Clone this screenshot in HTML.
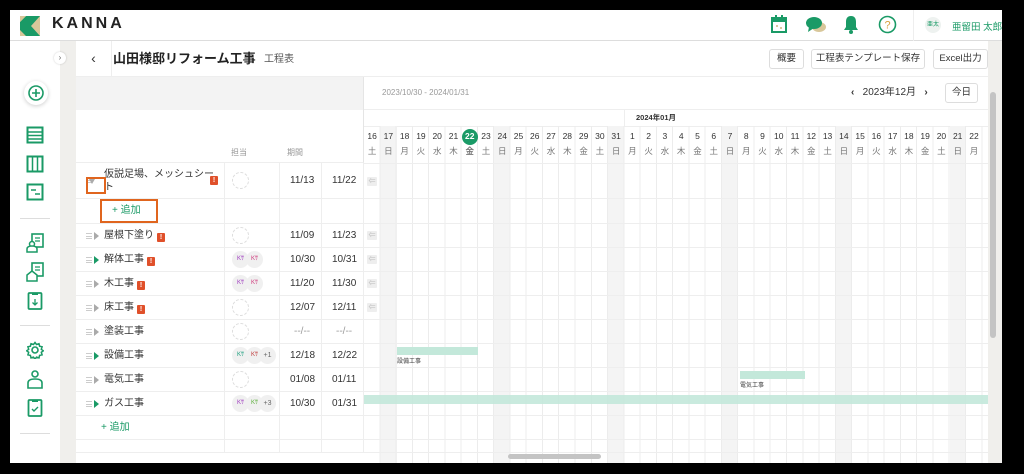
<!DOCTYPE html>
<html><head><meta charset="utf-8">
<style>
*{box-sizing:border-box;margin:0;padding:0}
body{width:1024px;height:474px;background:#000;position:relative;overflow:hidden;font-family:"Liberation Sans","Noto Sans CJK JP",sans-serif;color:#333}
.a{position:absolute}
.win{left:10px;top:10px;width:992px;height:453px;background:#fff;overflow:hidden}
.hdr{left:0;top:0;width:992px;height:31px;background:#fff;border-bottom:1px solid #ddd;box-shadow:0 1px 3px rgba(0,0,0,.15)}
.side{left:0;top:31px;width:50px;height:422px;background:#fff}
.strip{left:50px;top:31px;width:16px;height:422px;background:#f0efec}
.rstrip{left:978px;top:31px;width:14px;height:422px;background:#f0efec}
.g{color:#1a9a66}
.btn{border:1px solid #ddd;border-radius:3px;background:#fff;font-size:9.5px;height:20px;line-height:18px;text-align:center;color:#333;white-space:nowrap;overflow:hidden}
.row{left:66px;width:912px;height:24px;border-bottom:1px solid #eee}
.cell{position:absolute;top:0;height:100%;border-right:1px solid #eee}
.dt{position:absolute;font-size:10px;line-height:12px;color:#333;top:6px}
.nm{position:absolute;left:28px;top:5px;font-size:10px;line-height:13px;color:#333;white-space:nowrap}
.hb{position:absolute;left:10px;top:9px;width:6px;height:6px;border-top:1px solid #ccc;border-bottom:1px solid #ccc}
.hb:after{content:"";position:absolute;left:0;top:2px;width:6px;border-top:1px solid #ccc}
.tri{position:absolute;left:18px;top:8px;width:0;height:0;border-left:5px solid #aaa;border-top:4px solid transparent;border-bottom:4px solid transparent}
.tri.gr{border-left-color:#1a9a66}
.ex{display:inline-block;width:8px;height:9px;background:#e0502a;color:#fff;font-size:7px;line-height:9px;text-align:center;border-radius:1px;margin-left:3px;vertical-align:-1px;font-weight:bold}
.cir{position:absolute;left:7px;top:3px;width:17px;height:17px;border:1px dashed #ddd;border-radius:50%}
.av{position:absolute;top:3px;width:17px;height:17px;border-radius:50%;background:#f0f0f0;font-size:6px;line-height:17px;text-align:center}
.arr{position:absolute;left:3px;top:7px;width:10px;height:9px;background:#eee;border-radius:1px;font-size:7px;color:#bbb;text-align:center;line-height:9px}
.days{display:flex}
.days div{width:16.27px;text-align:center;font-size:8.5px;line-height:15px;color:#333}
.days div span{display:block;color:#777}
</style></head><body>
<div class="a win">
 <div class="a hdr">
  <svg class="a" style="left:10px;top:6px" width="20" height="20" viewBox="0 0 20 20"><rect width="20" height="20" fill="#d8c79a"/><polygon points="6,0 20,0 11,10 20,20 6,20 0,14 0,6" fill="#1a9a66"/><polygon points="0,0 6,0 0,6" fill="#d8c79a"/></svg>
  <div class="a" style="left:42px;top:5px;font-size:16px;font-weight:bold;letter-spacing:3px;color:#222">KANNA</div>
  <svg class="a" style="left:760px;top:4px" width="18" height="20" viewBox="0 0 18 20"><rect x="2" y="4" width="14" height="14" fill="none" stroke="#1a9a66" stroke-width="2"/><rect x="2" y="4" width="14" height="4" fill="#1a9a66"/><rect x="5" y="1" width="2" height="4" fill="#1a9a66"/><rect x="11" y="1" width="2" height="4" fill="#1a9a66"/><rect x="6" y="11" width="2" height="2" fill="#d8c79a"/><rect x="10" y="13" width="2" height="2" fill="#d8c79a"/></svg>
  <svg class="a" style="left:795px;top:5px" width="22" height="20" viewBox="0 0 22 20"><ellipse cx="14" cy="12" rx="7" ry="5" fill="#d8c79a"/><ellipse cx="9" cy="8" rx="8" ry="6" fill="#1a9a66"/><polygon points="4,12 3,17 9,13" fill="#1a9a66"/></svg>
  <svg class="a" style="left:833px;top:4px" width="16" height="20" viewBox="0 0 16 20"><path d="M8 2c-4 0-5 3-5 6v5l-2 3h14l-2-3V8c0-3-1-6-5-6z" fill="#1a9a66"/><circle cx="8" cy="18" r="2" fill="#1a9a66"/></svg>
  <svg class="a" style="left:868px;top:5px" width="19" height="19" viewBox="0 0 19 19"><circle cx="9.5" cy="9.5" r="8" fill="none" stroke="#1a9a66" stroke-width="1.6"/><text x="9.5" y="13.5" text-anchor="middle" font-size="11" fill="#d8a040" font-family="Liberation Sans">?</text></svg>
  <div class="a" style="left:903px;top:0;width:1px;height:31px;background:#eee"></div>
  <div class="a" style="left:915px;top:7px;width:16px;height:16px;border-radius:50%;background:#eef2f0;font-size:6px;color:#1a9a66;text-align:center;line-height:16px;white-space:nowrap">亜太</div>
  <div class="a g" style="left:942px;top:9px;font-size:9.5px;white-space:nowrap">亜留田 太郎</div>
 </div>
 <div class="a side">
  <div class="a" style="left:14px;top:40px;width:24px;height:24px;border-radius:50%;box-shadow:0 1px 4px rgba(0,0,0,.2);background:#fff"></div>
  <svg class="a" style="left:17px;top:43px" width="18" height="18" viewBox="0 0 18 18"><circle cx="9" cy="9" r="7" fill="none" stroke="#1a9a66" stroke-width="1.6"/><path d="M9 5v8M5 9h8" stroke="#1a9a66" stroke-width="1.6"/></svg>
  <svg class="a" style="left:16px;top:85px" width="18" height="18" viewBox="0 0 18 18"><rect x="1.5" y="1.5" width="15" height="15" fill="none" stroke="#1a9a66" stroke-width="2"/><path d="M2 6h14M2 9.5h14M2 13h14" stroke="#1a9a66" stroke-width="1.5"/></svg>
  <svg class="a" style="left:16px;top:114px" width="18" height="18" viewBox="0 0 18 18"><rect x="1.5" y="1.5" width="15" height="15" fill="none" stroke="#1a9a66" stroke-width="2"/><path d="M6.5 2v14M11.5 2v14" stroke="#1a9a66" stroke-width="1.5"/></svg>
  <svg class="a" style="left:16px;top:142px" width="18" height="18" viewBox="0 0 18 18"><rect x="1.5" y="1.5" width="15" height="15" fill="none" stroke="#1a9a66" stroke-width="2"/><path d="M5 7h5M9 11h5" stroke="#1a9a66" stroke-width="1.5"/></svg>
  <div class="a" style="left:10px;top:177px;width:30px;height:1px;background:#ddd"></div>
  <svg class="a" style="left:16px;top:192px" width="18" height="20" viewBox="0 0 18 20"><rect x="6" y="1" width="11" height="13" fill="none" stroke="#1a9a66" stroke-width="1.6"/><path d="M9 5h5M9 8h5" stroke="#1a9a66" stroke-width="1.3"/><circle cx="6" cy="11" r="2.5" fill="#fff" stroke="#1a9a66" stroke-width="1.5"/><path d="M1 19v-3c0-2 2-3 5-3s5 1 5 3v3z" fill="#fff" stroke="#1a9a66" stroke-width="1.5"/></svg>
  <svg class="a" style="left:16px;top:221px" width="18" height="20" viewBox="0 0 18 20"><rect x="6" y="1" width="11" height="13" fill="none" stroke="#1a9a66" stroke-width="1.6"/><path d="M9 5h5M9 8h5" stroke="#1a9a66" stroke-width="1.3"/><path d="M1 19v-6l5-4 5 4v6z" fill="#fff" stroke="#1a9a66" stroke-width="1.5"/></svg>
  <svg class="a" style="left:17px;top:250px" width="16" height="20" viewBox="0 0 16 20"><rect x="1.5" y="2" width="13" height="16" rx="1" fill="none" stroke="#1a9a66" stroke-width="1.8"/><path d="M5 2h6v2H5z" fill="#1a9a66"/><path d="M8 8v6M5.5 11.5L8 14l2.5-2.5" fill="none" stroke="#1a9a66" stroke-width="1.3"/></svg>
  <div class="a" style="left:10px;top:284px;width:30px;height:1px;background:#ddd"></div>
  <svg class="a" style="left:16px;top:300px" width="18" height="18" viewBox="0 0 18 18"><circle cx="9" cy="9" r="3" fill="none" stroke="#1a9a66" stroke-width="1.6"/><path d="M9 1.5l1.5 2 2.5-.8.6 2.5 2.5.6-.8 2.5 2 1.5-2 1.5.8 2.5-2.5.6-.6 2.5-2.5-.8-1.5 2-1.5-2-2.5.8-.6-2.5-2.5-.6.8-2.5-2-1.5 2-1.5-.8-2.5 2.5-.6.6-2.5 2.5.8z" fill="none" stroke="#1a9a66" stroke-width="1.5"/></svg>
  <svg class="a" style="left:16px;top:328px" width="18" height="20" viewBox="0 0 18 20"><circle cx="9" cy="5" r="3" fill="none" stroke="#1a9a66" stroke-width="1.6"/><path d="M2 19v-5c0-3 3-4 7-4s7 1 7 4v5z" fill="none" stroke="#1a9a66" stroke-width="1.6"/></svg>
  <svg class="a" style="left:17px;top:357px" width="16" height="20" viewBox="0 0 16 20"><rect x="1.5" y="2" width="13" height="16" rx="1" fill="none" stroke="#1a9a66" stroke-width="1.8"/><path d="M5 2h6v2H5z" fill="#1a9a66"/><path d="M5 11l2 2 4-4" fill="none" stroke="#1a9a66" stroke-width="1.4"/></svg>
  <div class="a" style="left:10px;top:392px;width:30px;height:1px;background:#ddd"></div>
 </div>
 <div class="a strip"></div>
 <div class="a" style="left:44px;top:42px;width:12px;height:12px;border-radius:50%;background:#fff;box-shadow:0 0 2px rgba(0,0,0,.2);font-size:8px;text-align:center;line-height:12px;color:#666">›</div>
 <div class="a rstrip"></div>
 <!-- title bar -->
 <div class="a" style="left:66px;top:31px;width:912px;height:36px;background:#fff;border-bottom:1px solid #eee"></div>
 <div class="a" style="left:66px;top:31px;width:36px;height:36px;border-right:1px solid #eee;font-size:14px;text-align:center;line-height:34px;color:#333">‹</div>
 <div class="a" style="left:103px;top:41px;font-size:13px;line-height:16px;font-weight:bold;color:#222">山田様邸リフォーム工事</div>
 <div class="a" style="left:254px;top:44px;font-size:10px;line-height:12px;color:#555">工程表</div>
 <div class="a btn" style="left:759px;top:39px;width:35px">概要</div>
 <div class="a btn" style="left:801px;top:39px;width:114px">工程表テンプレート保存</div>
 <div class="a btn" style="left:923px;top:39px;width:55px">Excel出力</div>
 <!-- gantt header -->
 <div class="a" style="left:66px;top:67px;width:288px;height:33px;background:#f3f3f3;border-right:1px solid #e5e5e5"></div>
 <div class="a" style="left:66px;top:100px;width:288px;height:53px;background:#fff;border-bottom:1px solid #eee;border-right:1px solid #e5e5e5"></div>
 <div class="a" style="left:221px;top:138px;font-size:8px;line-height:10px;color:#999">担当</div>
 <div class="a" style="left:277px;top:138px;font-size:8px;line-height:10px;color:#999">期間</div>
 <div class="a" style="left:372px;top:78px;font-size:8px;line-height:10px;color:#999">2023/10/30 - 2024/01/31</div>
 <div class="a" style="left:841px;top:77px;font-size:10px;line-height:12px;color:#333;white-space:nowrap"><b>‹</b>&nbsp;&nbsp; 2023年12月 &nbsp;&nbsp;<b>›</b></div>
 <div class="a btn" style="left:935px;top:73px;width:33px">今日</div>
 <div class="a" style="left:354px;top:99px;width:624px;height:1px;background:#eee"></div>
 <div class="a" style="left:354px;top:116px;width:624px;height:1px;background:#eee"></div>
 <div class="a" style="left:614px;top:100px;width:1px;height:16px;background:#eee"></div>
 <div class="a" style="left:626px;top:103px;font-size:7.5px;line-height:10px;font-weight:bold;color:#333">2024年01月</div>
 <!-- sunday shading -->
 <div class="a" style="left:370.3px;top:116px;width:16.3px;height:337px;background:#f4f4f4"></div>
 <div class="a" style="left:484.2px;top:116px;width:16.3px;height:337px;background:#f4f4f4"></div>
 <div class="a" style="left:598px;top:116px;width:16.3px;height:337px;background:#f4f4f4"></div>
 <div class="a" style="left:712px;top:116px;width:16.3px;height:337px;background:#f4f4f4"></div>
 <div class="a" style="left:825.8px;top:116px;width:16.3px;height:337px;background:#f4f4f4"></div>
 <div class="a" style="left:939.7px;top:116px;width:16.3px;height:337px;background:#f4f4f4"></div>
 <div class="a" style="left:354px;top:116px;width:619px;height:337px;background:repeating-linear-gradient(90deg,transparent 0,transparent 15.27px,#ececec 15.27px,#ececec 16.27px)"></div>
 <div class="a" style="left:452px;top:119px;width:16px;height:16px;border-radius:50%;background:#1a9a66"></div>
 <div class="a days" style="left:354px;top:119px">
  <div>16<span>土</span></div><div>17<span>日</span></div><div>18<span>月</span></div><div>19<span>火</span></div><div>20<span>水</span></div><div>21<span>木</span></div><div style="color:#fff;font-weight:bold">22<span>金</span></div><div>23<span>土</span></div><div>24<span>日</span></div><div>25<span>月</span></div><div>26<span>火</span></div><div>27<span>水</span></div><div>28<span>木</span></div><div>29<span>金</span></div><div>30<span>土</span></div><div>31<span>日</span></div><div>1<span>月</span></div><div>2<span>火</span></div><div>3<span>水</span></div><div>4<span>木</span></div><div>5<span>金</span></div><div>6<span>土</span></div><div>7<span>日</span></div><div>8<span>月</span></div><div>9<span>火</span></div><div>10<span>水</span></div><div>11<span>木</span></div><div>12<span>金</span></div><div>13<span>土</span></div><div>14<span>日</span></div><div>15<span>月</span></div><div>16<span>火</span></div><div>17<span>水</span></div><div>18<span>木</span></div><div>19<span>金</span></div><div>20<span>土</span></div><div>21<span>日</span></div><div>22<span>月</span></div>
 </div>
 <div class="a" style="left:354px;top:153px;width:624px;height:1px;background:#eee"></div>
 <!-- rows -->
 <div class="a row" style="top:153px;height:36px"><div class="cell" style="left:0;width:149px"></div><div class="cell" style="left:149px;width:55px"></div><div class="cell" style="left:204px;width:42px"></div><div class="cell" style="left:246px;width:42px"></div>
  <div class="hb" style="top:14px"></div><div style="position:absolute;left:13px;top:16px;width:6px;height:0;border-top:5px solid #aaa;border-left:3px solid transparent;border-right:3px solid transparent"></div>
  <div class="nm" style="left:28px;top:5px">仮説足場、メッシュシー<br>ト</div><div class="ex" style="position:absolute;left:134px;top:13px;margin:0">!</div>
  <div class="cir" style="left:156px;top:9px"></div><div class="dt" style="left:214px;top:12px">11/13</div><div class="dt" style="left:256px;top:12px">11/22</div><div class="arr" style="left:291px;top:14px">⇐</div></div>
 <div class="a" style="left:76px;top:167px;width:20px;height:17px;border:2px solid #e0651e"></div>
 <div class="a row" style="top:189px;height:25px"><div class="cell" style="left:0;width:149px"></div><div class="cell" style="left:149px;width:55px"></div><div class="cell" style="left:204px;width:42px"></div><div class="cell" style="left:246px;width:42px"></div>
  <div class="a g" style="left:36px;top:6px;font-size:10px;line-height:12px">+ 追加</div></div>
 <div class="a" style="left:90px;top:189px;width:58px;height:24px;border:2px solid #e0651e"></div>
 <div class="a row" style="top:214px"><div class="cell" style="left:0;width:149px"></div><div class="cell" style="left:149px;width:55px"></div><div class="cell" style="left:204px;width:42px"></div><div class="cell" style="left:246px;width:42px"></div><div class="hb"></div><div class="tri"></div><div class="nm">屋根下塗り<span class="ex">!</span></div><div class="cir" style="left:156px"></div><div class="dt" style="left:214px">11/09</div><div class="dt" style="left:256px">11/23</div><div class="arr" style="left:291px">⇐</div></div>
 <div class="a row" style="top:238px"><div class="cell" style="left:0;width:149px"></div><div class="cell" style="left:149px;width:55px"></div><div class="cell" style="left:204px;width:42px"></div><div class="cell" style="left:246px;width:42px"></div><div class="hb"></div><div class="tri gr"></div><div class="nm">解体工事<span class="ex">!</span></div><div class="av" style="left:156px;color:#a040c0">Kｻ</div><div class="av" style="left:170px;color:#d04080">Kｻ</div><div class="dt" style="left:214px">10/30</div><div class="dt" style="left:256px">10/31</div><div class="arr" style="left:291px">⇐</div></div>
 <div class="a row" style="top:262px"><div class="cell" style="left:0;width:149px"></div><div class="cell" style="left:149px;width:55px"></div><div class="cell" style="left:204px;width:42px"></div><div class="cell" style="left:246px;width:42px"></div><div class="hb"></div><div class="tri"></div><div class="nm">木工事<span class="ex">!</span></div><div class="av" style="left:156px;color:#a040c0">Kｻ</div><div class="av" style="left:170px;color:#d04080">Kｻ</div><div class="dt" style="left:214px">11/20</div><div class="dt" style="left:256px">11/30</div><div class="arr" style="left:291px">⇐</div></div>
 <div class="a row" style="top:286px"><div class="cell" style="left:0;width:149px"></div><div class="cell" style="left:149px;width:55px"></div><div class="cell" style="left:204px;width:42px"></div><div class="cell" style="left:246px;width:42px"></div><div class="hb"></div><div class="tri"></div><div class="nm">床工事<span class="ex">!</span></div><div class="cir" style="left:156px"></div><div class="dt" style="left:214px">12/07</div><div class="dt" style="left:256px">12/11</div><div class="arr" style="left:291px">⇐</div></div>
 <div class="a row" style="top:310px"><div class="cell" style="left:0;width:149px"></div><div class="cell" style="left:149px;width:55px"></div><div class="cell" style="left:204px;width:42px"></div><div class="cell" style="left:246px;width:42px"></div><div class="hb"></div><div class="tri"></div><div class="nm">塗装工事</div><div class="cir" style="left:156px"></div><div class="dt" style="left:218px;color:#999">--/--</div><div class="dt" style="left:260px;color:#999">--/--</div></div>
 <div class="a row" style="top:334px"><div class="cell" style="left:0;width:149px"></div><div class="cell" style="left:149px;width:55px"></div><div class="cell" style="left:204px;width:42px"></div><div class="cell" style="left:246px;width:42px"></div><div class="hb"></div><div class="tri gr"></div><div class="nm">設備工事</div><div class="av" style="left:156px;color:#20a080">Kｻ</div><div class="av" style="left:170px;color:#c04040">Kｻ</div><div class="av" style="left:183px;color:#666;font-size:7px">+1</div><div class="dt" style="left:214px">12/18</div><div class="dt" style="left:256px">12/22</div></div>
 <div class="a row" style="top:358px"><div class="cell" style="left:0;width:149px"></div><div class="cell" style="left:149px;width:55px"></div><div class="cell" style="left:204px;width:42px"></div><div class="cell" style="left:246px;width:42px"></div><div class="hb"></div><div class="tri"></div><div class="nm">電気工事</div><div class="cir" style="left:156px"></div><div class="dt" style="left:214px">01/08</div><div class="dt" style="left:256px">01/11</div></div>
 <div class="a row" style="top:382px"><div class="cell" style="left:0;width:149px"></div><div class="cell" style="left:149px;width:55px"></div><div class="cell" style="left:204px;width:42px"></div><div class="cell" style="left:246px;width:42px"></div><div class="hb"></div><div class="tri gr"></div><div class="nm">ガス工事</div><div class="av" style="left:156px;color:#a040c0">Kｻ</div><div class="av" style="left:170px;color:#60b040">Kｻ</div><div class="av" style="left:183px;color:#666;font-size:7px">+3</div><div class="dt" style="left:214px">10/30</div><div class="dt" style="left:256px">01/31</div></div>
 <div class="a row" style="top:406px"><div class="cell" style="left:0;width:149px"></div><div class="cell" style="left:149px;width:55px"></div><div class="cell" style="left:204px;width:42px"></div><div class="cell" style="left:246px;width:42px"></div><div class="a g" style="left:25px;top:6px;font-size:10px;line-height:12px">+ 追加</div></div>
 <div class="a row" style="top:430px;height:13px"><div class="cell" style="left:0;width:149px"></div><div class="cell" style="left:149px;width:55px"></div><div class="cell" style="left:204px;width:42px"></div><div class="cell" style="left:246px;width:42px"></div></div>
 <!-- bars -->
 <div class="a" style="left:387px;top:337px;width:81px;height:8px;background:#c3e8da"></div>
 <div class="a" style="left:387px;top:348px;font-size:6px;line-height:8px;color:#444">設備工事</div>
 <div class="a" style="left:730px;top:361px;width:65px;height:8px;background:#c3e8da"></div>
 <div class="a" style="left:730px;top:372px;font-size:6px;line-height:8px;color:#444">電気工事</div>
 <div class="a" style="left:354px;top:385px;width:624px;height:9px;background:#c3e8da;opacity:.9"></div>
 <div class="a" style="left:980px;top:82px;width:6px;height:246px;border-radius:3px;background:#c4c4c4"></div>
 <div class="a" style="left:498px;top:444px;width:93px;height:5px;border-radius:3px;background:#c4c4c4"></div>
</div>
</body></html>
